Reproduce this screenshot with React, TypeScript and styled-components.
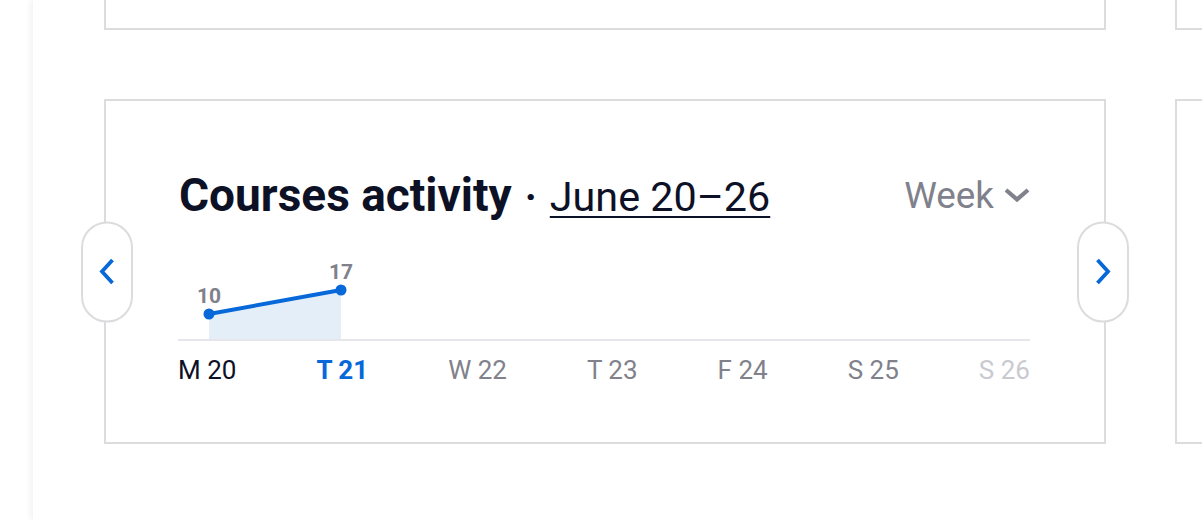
import styled, { createGlobalStyle } from 'styled-components'

const colors = {
  ink: '#0d1126',
  blue: '#0768d9',
  gray: '#80818b',
  grayLight: '#c9cacf',
  border: '#dcdcdf',
  axis: '#e6e6ea',
  fill: '#e3eef9',
  white: '#ffffff',
}

const GlobalStyle = createGlobalStyle`
  html, body {
    margin: 0;
    background: ${colors.white};
    font-family: Roboto, 'Liberation Sans', sans-serif;
  }
`

const Page = styled.div`
  width: 1202px;
  height: 520px;
  overflow: hidden;
  display: flex;
`

const Main = styled.main`
  margin-left: 33px;
  flex: 1;
  display: flex;
  flex-direction: column;
  align-items: flex-start;
  gap: 69px;
  padding-left: 71px;
  box-shadow: -3px 0 6px rgba(0, 0, 0, 0.05);
  background: ${colors.white};
`

const CardRow = styled.div`
  display: flex;
  align-items: flex-start;
  gap: 69px;
`

const Card = styled.section`
  position: relative;
  flex: 0 0 1002px;
  box-sizing: border-box;
  height: 345px;
  border: 2px solid ${colors.border};
  padding: 70px 74px 57px 72px;
  display: flex;
  flex-direction: column;
`

const PeekCard = styled.div`
  flex: 0 0 1002px;
  box-sizing: border-box;
  height: 30px;
  border: 2px solid ${colors.border};
  border-top: none;
`

const TitleRow = styled.div`
  display: flex;
  align-items: baseline;
  height: 48px;
  line-height: 48px;
  padding-left: 1px;
`

const Title = styled.h2`
  margin: 0;
  font-size: 46px;
  font-weight: 700;
  color: ${colors.ink};
  white-space: nowrap;
`

const Dot = styled.span`
  margin: 0 13px;
  font-size: 40px;
  font-weight: 700;
  color: ${colors.ink};
`

const Range = styled.a`
  font-size: 41.3px;
  color: ${colors.ink};
  text-decoration: underline;
  text-decoration-thickness: 2px;
  text-underline-offset: 5px;
  white-space: nowrap;
`

const Period = styled.button`
  margin-left: auto;
  display: flex;
  align-items: center;
  gap: 10px;
  border: none;
  background: none;
  padding: 0;
  font-family: inherit;
  font-size: 36.8px;
  color: ${colors.gray};
  cursor: pointer;
  align-self: center;
`

const Chart = styled.svg`
  display: block;
  margin-top: 31px;
  width: 100%;
  height: 91px;
  overflow: visible;
`

const Days = styled.div`
  display: flex;
  justify-content: space-between;
  margin-top: 15px;
  height: 28px;
  line-height: 28px;
`

const Day = styled.span<{ $tone: 'past' | 'today' | 'future' | 'off' }>`
  font-size: 26px;
  font-weight: ${({ $tone }) => ($tone === 'today' ? 700 : 400)};
  color: ${({ $tone }) =>
    $tone === 'past' ? colors.ink : $tone === 'today' ? colors.blue : $tone === 'off' ? colors.grayLight : colors.gray};
`

const NavButton = styled.button<{ $side: 'left' | 'right' }>`
  position: absolute;
  top: 50%;
  ${({ $side }) => ($side === 'left' ? 'left: -25px;' : 'right: -25px;')}
  transform: translateY(-50%);
  width: 52px;
  height: 101px;
  box-sizing: border-box;
  border: 2px solid ${colors.border};
  border-radius: 26px;
  background: ${colors.white};
  display: flex;
  align-items: center;
  justify-content: center;
  padding: 0;
  cursor: pointer;
`

const Chevron = ({ dir }: { dir: 'left' | 'right' }) => (
  <svg width="16" height="28" viewBox="0 0 16 28">
    <path
      d={dir === 'right' ? 'M2.5 2.5 L13 14 L2.5 25.5' : 'M13.5 2.5 L3 14 L13.5 25.5'}
      fill="none"
      stroke={colors.blue}
      strokeWidth="3.8"
      strokeLinejoin="miter"
    />
  </svg>
)

const ChevronDown = () => (
  <svg width="26" height="16" viewBox="0 0 26 16">
    <path d="M2 3 L13 12.5 L24 3" fill="none" stroke={colors.gray} strokeWidth="4.2" />
  </svg>
)

const days = [
  { label: 'M 20', tone: 'past', value: 10 },
  { label: 'T 21', tone: 'today', value: 17 },
  { label: 'W 22', tone: 'future' },
  { label: 'T 23', tone: 'future' },
  { label: 'F 24', tone: 'future' },
  { label: 'S 25', tone: 'future' },
  { label: 'S 26', tone: 'off' },
] as const

const BASE = 90
const xAt = (i: number) => 31 + i * 132
const yAt = (v: number) => 98.3 - 3.43 * v

export default function App() {
  const points = days
    .map((d, i) => ('value' in d ? { x: xAt(i), y: yAt(d.value), v: d.value } : null))
    .filter((p): p is { x: number, y: number, v: number } => p !== null)
  const line = points.map((p) => `${p.x},${p.y}`).join(' ')
  const area = `${points[0].x},${BASE - 1} ${line} ${points[points.length - 1].x},${BASE - 1}`

  return (
    <Page>
      <GlobalStyle />
      <Main>
        <CardRow>
          <PeekCard />
          <PeekCard />
        </CardRow>
        <CardRow>
          <Card>
            <TitleRow>
              <Title>Courses activity</Title>
              <Dot>·</Dot>
              <Range>June 20–26</Range>
              <Period>
                Week
                <ChevronDown />
              </Period>
            </TitleRow>
            <Chart viewBox="0 0 852 91" preserveAspectRatio="none">
              <polygon points={area} fill={colors.fill} />
              <line x1="0" x2="852" y1={BASE} y2={BASE} stroke={colors.axis} strokeWidth="2" />
              <polyline points={line} fill="none" stroke={colors.blue} strokeWidth="4" />
              {points.map((p) => (
                <g key={p.x}>
                  <circle cx={p.x} cy={p.y} r="5.5" fill={colors.blue} />
                  <text
                    x={p.x}
                    y={p.y - 11}
                    textAnchor="middle"
                    fontSize="21"
                    fontWeight="700"
                    fill={colors.gray}
                    fontFamily="Roboto, sans-serif"
                  >
                    {p.v}
                  </text>
                </g>
              ))}
            </Chart>
            <Days>
              {days.map((d) => (
                <Day key={d.label} $tone={d.tone}>{d.label}</Day>
              ))}
            </Days>
            <NavButton $side="left" aria-label="Previous">
              <Chevron dir="left" />
            </NavButton>
            <NavButton $side="right" aria-label="Next">
              <Chevron dir="right" />
            </NavButton>
          </Card>
          <Card />
        </CardRow>
      </Main>
    </Page>
  )
}
